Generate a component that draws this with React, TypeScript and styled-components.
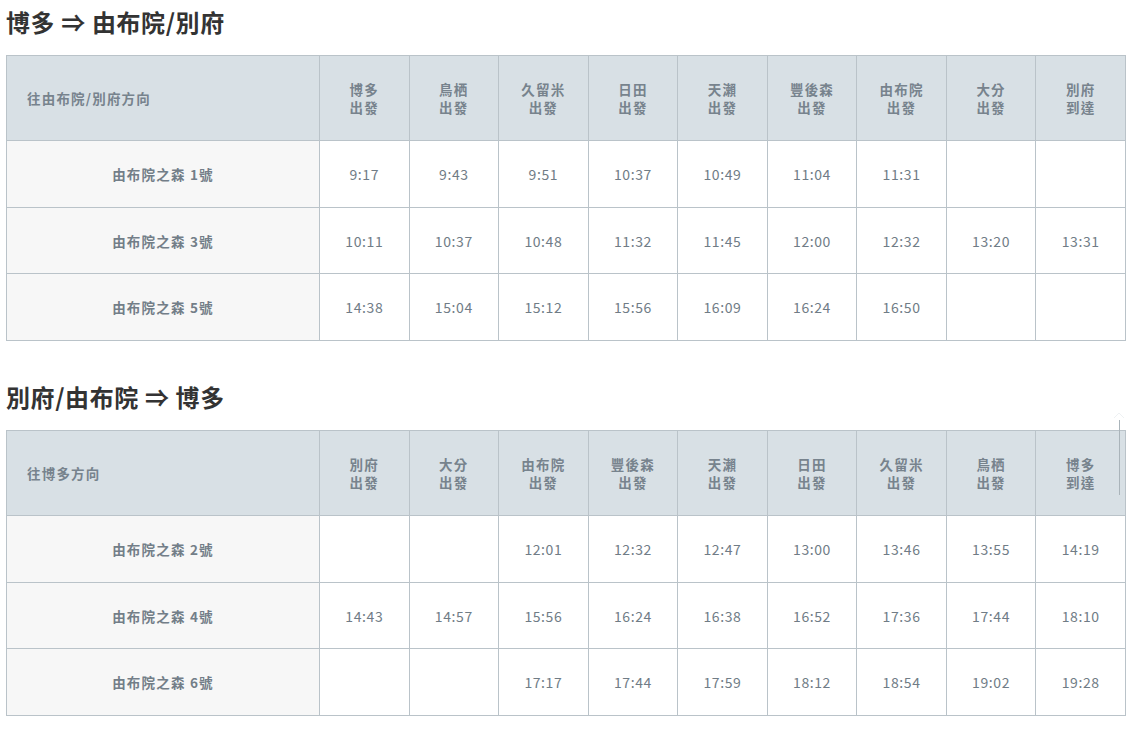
import React from "react";
import styled, { createGlobalStyle } from "styled-components";

const GlobalStyle = createGlobalStyle`
  html, body { margin: 0; padding: 0; background: #ffffff; }
  body { font-family: "Noto Sans CJK TC", "Noto Sans", sans-serif; }
`;

const Page = styled.div`
  position: relative;
  padding: 7px 0 0 6px;
  width: 1120px;
`;

const Section = styled.section`
  margin-bottom: 41px;
`;

const Title = styled.h2`
  margin: 0 0 18px 0;
  font-size: 24px;
  line-height: 30px;
  font-weight: 700;
  color: #333333;
  letter-spacing: 0.6px;
`;

const Table = styled.table`
  width: 1120px;
  border-collapse: collapse;
  table-layout: fixed;
  border: 1px solid #bac3c9;
  font-size: 14px;
`;

const NameCol = styled.col`
  width: 313px;
`;

const HeadCell = styled.th<{ $first?: boolean }>`
  box-sizing: border-box;
  height: 85px;
  padding: 0 ${(p) => (p.$first ? "20px" : "0")};
  background: #d8e0e5;
  border: 1px solid #bac3c9;
  color: #77838d;
  font-weight: 700;
  font-size: 13.5px;
  line-height: 18px;
  letter-spacing: 1.2px;
  text-align: ${(p) => (p.$first ? "left" : "center")};
`;

const NameCell = styled.td`
  height: 65.7px;
  padding: 0;
  background: #f7f7f7;
  border: 1px solid #bac3c9;
  color: #737e88;
  font-weight: 700;
  font-size: 13.5px;
  letter-spacing: 1.2px;
  text-align: center;
`;

const TimeCell = styled.td`
  height: 65.7px;
  padding: 0;
  background: #ffffff;
  border: 1px solid #bac3c9;
  color: #707c86;
  font-size: 14px;
  letter-spacing: 0.6px;
  text-align: center;
`;

const ScrollMark = styled.div`
  position: absolute;
  left: 1113px;
  top: 400px;
  width: 12px;
  height: 96px;
  pointer-events: none;
`;

const ScrollLine = styled.div`
  position: absolute;
  left: 6px;
  top: 20px;
  width: 1px;
  height: 75px;
  background: #aab4ba;
`;

type Row = { name: string; times: string[] };
type Timetable = { title: string; direction: string; stations: [string, string][]; rows: Row[] };

const tables: Timetable[] = [
  {
    title: "博多 ⇒ 由布院/別府",
    direction: "往由布院/別府方向",
    stations: [
      ["博多", "出發"],
      ["鳥栖", "出發"],
      ["久留米", "出發"],
      ["日田", "出發"],
      ["天瀨", "出發"],
      ["豐後森", "出發"],
      ["由布院", "出發"],
      ["大分", "出發"],
      ["別府", "到達"],
    ],
    rows: [
      { name: "由布院之森 1號", times: ["9:17", "9:43", "9:51", "10:37", "10:49", "11:04", "11:31", "", ""] },
      { name: "由布院之森 3號", times: ["10:11", "10:37", "10:48", "11:32", "11:45", "12:00", "12:32", "13:20", "13:31"] },
      { name: "由布院之森 5號", times: ["14:38", "15:04", "15:12", "15:56", "16:09", "16:24", "16:50", "", ""] },
    ],
  },
  {
    title: "別府/由布院 ⇒ 博多",
    direction: "往博多方向",
    stations: [
      ["別府", "出發"],
      ["大分", "出發"],
      ["由布院", "出發"],
      ["豐後森", "出發"],
      ["天瀨", "出發"],
      ["日田", "出發"],
      ["久留米", "出發"],
      ["鳥栖", "出發"],
      ["博多", "到達"],
    ],
    rows: [
      { name: "由布院之森 2號", times: ["", "", "12:01", "12:32", "12:47", "13:00", "13:46", "13:55", "14:19"] },
      { name: "由布院之森 4號", times: ["14:43", "14:57", "15:56", "16:24", "16:38", "16:52", "17:36", "17:44", "18:10"] },
      { name: "由布院之森 6號", times: ["", "", "17:17", "17:44", "17:59", "18:12", "18:54", "19:02", "19:28"] },
    ],
  },
];

export default function App() {
  return (
    <>
      <GlobalStyle />
      <Page>
        {tables.map((t) => (
          <Section key={t.title}>
            <Title>{t.title}</Title>
            <Table>
              <colgroup>
                <NameCol />
                {t.stations.map(([a]) => (
                  <col key={a} />
                ))}
              </colgroup>
              <thead>
                <tr>
                  <HeadCell $first>{t.direction}</HeadCell>
                  {t.stations.map(([a, b]) => (
                    <HeadCell key={a}>
                      {a}
                      <br />
                      {b}
                    </HeadCell>
                  ))}
                </tr>
              </thead>
              <tbody>
                {t.rows.map((r) => (
                  <tr key={r.name}>
                    <NameCell>{r.name}</NameCell>
                    {r.times.map((tm, i) => (
                      <TimeCell key={i}>{tm}</TimeCell>
                    ))}
                  </tr>
                ))}
              </tbody>
            </Table>
          </Section>
        ))}
        <ScrollMark>
          <svg width="12" height="8" viewBox="0 0 12 8">
            <path d="M1 7 L6 2 L11 7" fill="none" stroke="#eef1f3" strokeWidth="1" />
          </svg>
          <ScrollLine />
        </ScrollMark>
      </Page>
    </>
  );
}
